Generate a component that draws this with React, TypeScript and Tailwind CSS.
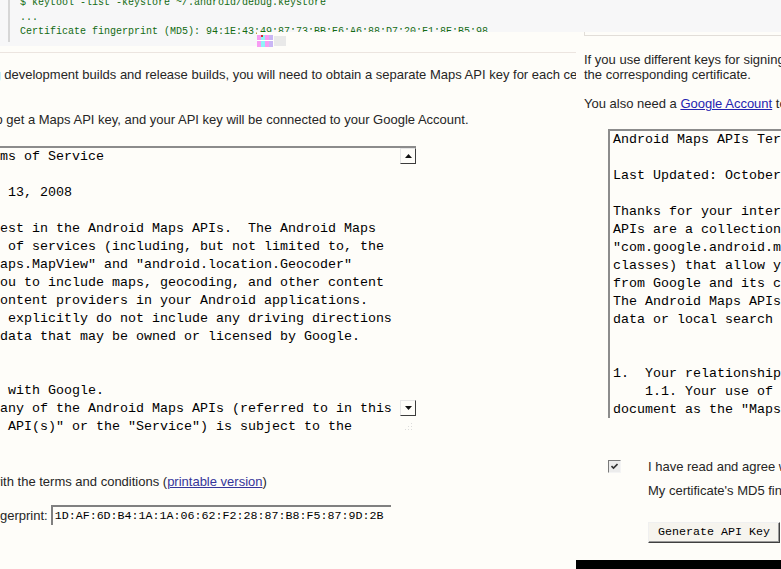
import React from 'react';

const TERMS = [
  'Android Maps APIs Terms of Service',
  '',
  'Last Updated: October 13, 2008',
  '',
  'Thanks for your interest in the Android Maps APIs.  The Android Maps',
  'APIs are a collection of services (including, but not limited to, the',
  '"com.google.android.maps.MapView" and "android.location.Geocoder"',
  'classes) that allow you to include maps, geocoding, and other content',
  'from Google and its content providers in your Android applications.',
  'The Android Maps APIs explicitly do not include any driving directions',
  'data or local search data that may be owned or licensed by Google.',
  '',
  '',
  '1.  Your relationship with Google.',
  '    1.1. Your use of any of the Android Maps APIs (referred to in this',
  'document as the "Maps API(s)" or the "Service") is subject to the',
];

const ScrollButton: React.FC<{ up?: boolean }> = ({ up }) => (
  <div className="flex h-[16px] w-[16px] items-center justify-center border border-t-[#e6e6e6] border-l-[#e6e6e6] border-r-[#3c3c3c] border-b-[#3c3c3c]">
    <svg width="7" height="4" viewBox="0 0 7 4">
      {up ? <polygon points="3.5,0 7,4 0,4" fill="#111" /> : <polygon points="0,0 7,0 3.5,4" fill="#111" />}
    </svg>
  </div>
);

// the terms box, same one appears in both captures
const TermsBox: React.FC<{ className?: string }> = ({ className }) => (
  <div className={`flex h-[289px] w-[589px] shrink-0 border-t-2 border-l-2 border-[#8c8c8c] ${className ?? ''}`}>
    <pre className="flex-1 overflow-hidden pl-[3px] font-['Liberation_Mono','Courier_New',monospace] text-[13.33px] leading-[18px] text-black">
      {TERMS.join('\n')}
    </pre>
    <div className="flex w-[16px] flex-col">
      <ScrollButton up />
      <div className="flex-1" />
      <ScrollButton />
      <div className="flex h-[19px] items-center justify-center">
        <svg width="12" height="12" viewBox="0 0 12 12">
          <rect x="9" y="3" width="1" height="1" fill="#dcdcdc" />
          <rect x="6" y="6" width="1" height="1" fill="#dcdcdc" />
          <rect x="9" y="6" width="1" height="1" fill="#dcdcdc" />
          <rect x="3" y="9" width="1" height="1" fill="#dcdcdc" />
          <rect x="6" y="9" width="1" height="1" fill="#dcdcdc" />
          <rect x="9" y="9" width="1" height="1" fill="#dcdcdc" />
        </svg>
      </div>
    </div>
  </div>
);

const Checkbox: React.FC = () => (
  <div className="flex h-[13px] w-[13px] shrink-0 items-center justify-center border border-t-[#7a7a7a] border-l-[#7a7a7a] border-r-[#f4f4f4] border-b-[#f4f4f4] bg-[#ececec]">
    <svg width="7" height="7" viewBox="0 0 7 7">
      <polyline points="0.5,3 2.5,5 6.5,1" fill="none" stroke="#333" strokeWidth="1.6" />
    </svg>
  </div>
);

const Glitch: React.FC = () => (
  <svg width="34" height="12" viewBox="0 0 34 12" className="mt-[3px]">
    <rect x="0" y="0" width="4" height="12" fill="#f79cf3" />
    <rect x="4" y="0" width="4" height="12" fill="#8ff3f8" />
    <rect x="8" y="0" width="4" height="12" fill="#f79cf3" />
    <rect x="12" y="0" width="4" height="12" fill="#c9b6f5" />
    <rect x="0" y="5" width="16" height="1" fill="#ffffff" />
    <rect x="4" y="0" width="2" height="2" fill="#d2312e" />
    <rect x="17" y="1" width="12" height="10" fill="#e9e9e9" />
  </svg>
);

export default function App() {
  return (
    <div className="h-[569px] w-[781px] overflow-hidden bg-[#fefdf9] font-['Liberation_Sans',Arial,sans-serif] text-[13px] leading-[15px] text-[#262626]">
      {/* code sample at the top */}
      <div className="h-[46px] overflow-hidden bg-[#f7f7f8] pl-[8px]">
        <div className="h-full border-l-2 border-[#d6d6d6] pl-[10px]">
          <pre className="-mt-[4px] font-['Liberation_Mono','Courier_New',monospace] text-[10px] leading-[14.5px] text-[#136b13]">
            {'$ keytool -list -keystore ~/.android/debug.keystore\n...\nCertificate fingerprint (MD5): 94:1E:43:49:87:73:BB:E6:A6:88:D7:20:F1:8E:B5:98'}
          </pre>
        </div>
      </div>

      <div className="relative -mt-[14px] flex h-[537px]">
        {/* left capture */}
        <div className="flex w-[576px] shrink-0 flex-col overflow-hidden">
          <div className="flex h-[14px]">
            <div className="w-[257px]" />
            <div className="flex-1 bg-[#fefdf9]">
              <Glitch />
            </div>
          </div>
          <div className="mt-[6px] h-px bg-[#ece5e0]" />
          <div className="ml-[-200px] w-[1000px]">
            <p className="mt-[14px]">
              If you use different keys for signing development builds and release builds, you will need to obtain a separate Maps API key for each certificate.
            </p>
            <p className="mt-[30px]">
              You also need a <a className="text-[#2424b0] underline">Google Account</a> to get a Maps API key, and your API key will be connected to your Google Account.
            </p>
            <TermsBox className="mt-[19px] ml-[27px]" />
            <div className="mt-[39px] ml-[20px] flex items-center">
              <Checkbox />
              <span className="ml-[27px]">
                I have read and agree with the terms and conditions (<a className="text-[#35359a] underline">printable version</a>)
              </span>
            </div>
            <div className="mt-[16px] flex h-[20px] items-center gap-[3px] pl-[66px]">
              <span>My certificate's MD5 fingerprint:</span>
              <div className="flex h-[20px] w-[340px] items-center border-t-2 border-l-2 border-t-[#808080] border-l-[#808080] pl-[2px] font-['Liberation_Mono','Courier_New',monospace] text-[11.67px] text-black">
                1D:AF:6D:B4:1A:1A:06:62:F2:28:87:B8:F5:87:9D:2B
              </div>
            </div>
          </div>
        </div>

        {/* right capture */}
        <div className="flex flex-1 flex-col overflow-hidden bg-[#fefdf9]">
          <div className="flex flex-1 flex-col pl-[8px]">
            <div className="h-[4px] shrink-0 border-l border-b border-[#e2ded9]" />
            <p className="mt-[16px] whitespace-nowrap">
              If you use different keys for signing development and release builds, you will need a separate key for
              <br />
              the corresponding certificate.
            </p>
            <p className="mt-[14px] whitespace-nowrap">
              You also need a <a className="text-[#2424b0] underline">Google Account</a> to get a Maps API key, and your API key will be connected to your Google Account.
            </p>
            <TermsBox className="mt-[18px] ml-[24px]" />
            <div className="mt-[41px] ml-[24px] flex items-center whitespace-nowrap">
              <Checkbox />
              <span className="ml-[27px]">
                I have read and agree with the terms and conditions (<a className="text-[#35359a] underline">printable version</a>)
              </span>
            </div>
            <div className="mt-[6px] flex h-[20px] items-center whitespace-nowrap pl-[64px]">
              <span>My certificate's MD5 fingerprint:</span>
            </div>
            <div className="mt-[22px] ml-[64px] flex h-[21px] w-[132px] shrink-0 items-center border border-t-[#f0f0f0] border-l-[#f0f0f0] border-r-[#404040] border-b-[#404040] bg-[#f6f4ee] pl-[9px] font-['Liberation_Mono','Courier_New',monospace] text-[11.67px] text-black shadow-[inset_-1px_-1px_0_#9a9a9a]">
              Generate API Key
            </div>
          </div>
          <div className="h-[9px] shrink-0 bg-black" />
        </div>
      </div>
    </div>
  );
}
